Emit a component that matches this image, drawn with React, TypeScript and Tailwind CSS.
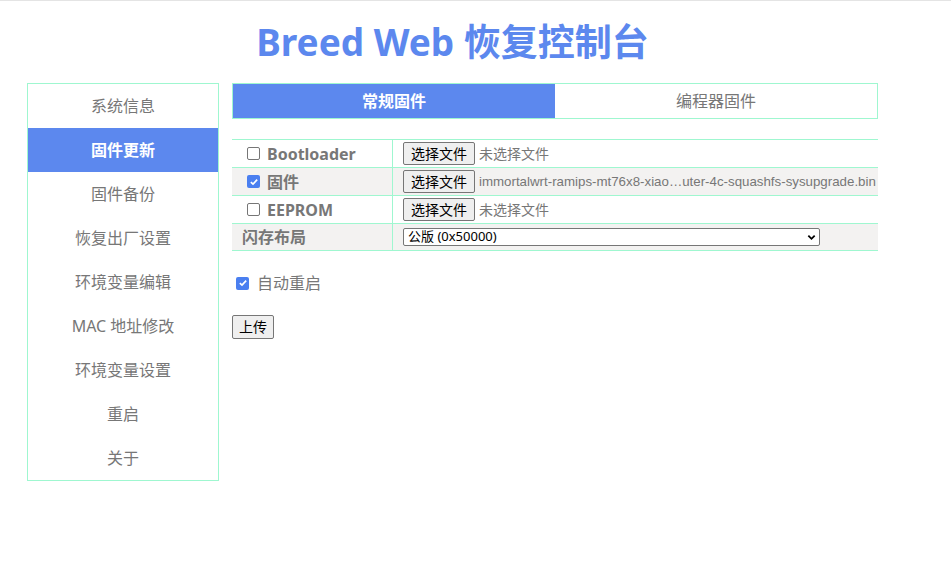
import React from "react";

const menu = ["系统信息", "固件更新", "固件备份", "恢复出厂设置", "环境变量编辑", "MAC 地址修改", "环境变量设置", "重启", "关于"];

const font = { fontFamily: '"Noto Sans", "Noto Sans CJK SC", sans-serif' };

function FileBtn() {
  return (
    <span className="inline-flex h-[23px] shrink-0 items-center whitespace-nowrap rounded-[2px] border border-[#767676] bg-[#efefef] px-[7px] text-[14px] leading-none text-black">
      选择文件
    </span>
  );
}

function Box({ checked }: { checked?: boolean }) {
  return checked ? (
    <span className="inline-flex h-[13px] w-[13px] shrink-0 items-center justify-center rounded-[2px] bg-[#4a7ff0]">
      <svg viewBox="0 0 12 12" className="h-[10px] w-[10px]">
        <path d="M2.2 6.2 L4.8 8.6 L9.8 3.2" fill="none" stroke="white" strokeWidth="2" />
      </svg>
    </span>
  ) : (
    <span className="inline-block h-[13px] w-[13px] shrink-0 rounded-[2px] border border-[#767676] bg-white" />
  );
}

export default function App() {
  return (
    <div className="min-h-[563px] w-[951px] border-t border-[#e4e4e4] bg-white text-[#777]" style={font}>
      <div className="w-[878px] pl-[27px]">
        <h1 className="flex h-[82px] items-center justify-center text-[37px] font-bold text-[#5c88ee]">
          Breed Web 恢复控制台
        </h1>
        <div className="flex items-start gap-[13px]">
          <div className="w-[192px] shrink-0 border border-[#9ff7d0]">
            {menu.map((m, i) => (
              <div
                key={m}
                className={
                  "flex h-[44px] items-center justify-center text-[16px] " +
                  (i === 1 ? "bg-[#5c88ee] font-bold text-white" : "text-[#777]")
                }
              >
                {m}
              </div>
            ))}
          </div>
          <div className="min-w-0 flex-1">
            <div className="flex h-[36px] border border-[#9ff7d0]">
              <div className="flex flex-1 items-center justify-center bg-[#5c88ee] text-[16px] font-bold text-white">常规固件</div>
              <div className="flex flex-1 items-center justify-center text-[16px] text-[#777]">编程器固件</div>
            </div>
            <div className="mt-[20px] border-t border-[#9ff7d0]">
              <div className="flex h-[28px] border-b border-[#9ff7d0]">
                <div className="flex w-[161px] shrink-0 items-center border-r border-[#9ff7d0] pl-[15px] text-[16px] font-bold text-[#777]">
                  <Box />
                  <span className="ml-[7px]">Bootloader</span>
                </div>
                <div className="flex flex-1 items-center pl-[10px]">
                  <FileBtn />
                  <span className="ml-[4px] whitespace-nowrap text-[14px] text-[#777]">未选择文件</span>
                </div>
              </div>
              <div className="flex h-[28px] border-b border-[#9ff7d0] bg-[#f3f2f1]">
                <div className="flex w-[161px] shrink-0 items-center border-r border-[#9ff7d0] pl-[15px] text-[16px] font-bold text-[#777]">
                  <Box checked />
                  <span className="ml-[7px]">固件</span>
                </div>
                <div className="flex min-w-0 flex-1 items-center overflow-hidden pl-[10px]">
                  <FileBtn />
                  <span className="ml-[4px] whitespace-nowrap text-[13.3px] text-[#777]" style={{ fontFamily: '"Liberation Sans", Arial, sans-serif' }}>
                    immortalwrt-ramips-mt76x8-xiao…uter-4c-squashfs-sysupgrade.bin
                  </span>
                </div>
              </div>
              <div className="flex h-[28px] border-b border-[#9ff7d0]">
                <div className="flex w-[161px] shrink-0 items-center border-r border-[#9ff7d0] pl-[15px] text-[16px] font-bold text-[#777]">
                  <Box />
                  <span className="ml-[7px]">EEPROM</span>
                </div>
                <div className="flex flex-1 items-center pl-[10px]">
                  <FileBtn />
                  <span className="ml-[4px] whitespace-nowrap text-[14px] text-[#777]">未选择文件</span>
                </div>
              </div>
              <div className="flex h-[27px] border-b border-[#9ff7d0] bg-[#f3f2f1]">
                <div className="flex w-[161px] shrink-0 items-center border-r border-[#9ff7d0] pl-[10px] text-[16px] font-bold text-[#777]">
                  闪存布局
                </div>
                <div className="flex flex-1 items-center pl-[10px]">
                  <div className="flex h-[18px] w-[417px] items-center justify-between rounded-[2px] border border-[#767676] bg-white pl-[4px] pr-[3px] text-[13px] text-black">
                    <span>公版 (0x50000)</span>
                    <svg viewBox="0 0 10 10" className="h-[9px] w-[9px]">
                      <path d="M1.5 3 L5 6.5 L8.5 3" fill="none" stroke="black" strokeWidth="2" />
                    </svg>
                  </div>
                </div>
              </div>
            </div>
            <div className="mt-[20px] flex items-center pl-[4px] text-[16px] text-[#777]">
              <Box checked />
              <span className="ml-[8px]">自动重启</span>
            </div>
            <div className="mt-[19px]">
              <span className="inline-flex h-[24px] items-center rounded-[2px] border border-[#767676] bg-[#efefef] px-[6px] text-[14px] text-black">
                上传
              </span>
            </div>
          </div>
        </div>
      </div>
    </div>
  );
}
